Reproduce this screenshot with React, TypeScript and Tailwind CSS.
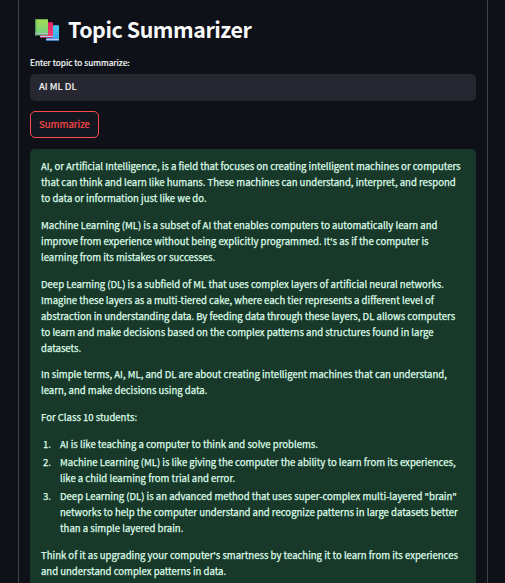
type BookProps = { x: number; y: number; fill: string; edge: string; h: number };

function Book({ x, y, fill, edge, h }: BookProps) {
  return (
    <g>
      <rect x={x} y={y} width="13" height={h} fill={fill} />
      <rect x={x} y={y} width="1.3" height={h} fill={edge} />
      <rect x={x} y={y} width="13" height="0.7" fill={edge} />
      <rect x={x} y={y + h - 2} width="13" height="1.2" fill="#c9bfe6" />
      <rect x={x} y={y + h - 0.8} width="13" height="0.8" fill={edge} />
    </g>
  );
}

function Books() {
  return (
    <svg width="24" height="24" viewBox="0 0 24 24" className="shrink-0">
      <defs>
        <linearGradient id="green" x1="0" y1="0" x2="0" y2="1">
          <stop offset="0" stopColor="#a5dc52" />
          <stop offset="1" stopColor="#6fcf83" />
        </linearGradient>
        <linearGradient id="pink" x1="0" y1="0" x2="0" y2="1">
          <stop offset="0" stopColor="#e0245e" />
          <stop offset="1" stopColor="#f24372" />
        </linearGradient>
        <linearGradient id="blue" x1="0" y1="0" x2="0" y2="1">
          <stop offset="0" stopColor="#4dc8e8" />
          <stop offset="1" stopColor="#35a5f2" />
        </linearGradient>
      </defs>
      <Book x={11} y={8} h={16} fill="url(#blue)" edge="#3b78b8" />
      <Book x={5} y={5} h={16} fill="url(#pink)" edge="#a52363" />
      <Book x={0} y={2} h={16.3} fill="url(#green)" edge="#579a54" />
    </svg>
  );
}

const paragraphs = [
  [
    "AI, or Artificial Intelligence, is a field that focuses on creating intelligent machines or computers",
    "that can think and learn like humans. These machines can understand, interpret, and respond",
    "to data or information just like we do.",
  ],
  [
    "Machine Learning (ML) is a subset of AI that enables computers to automatically learn and",
    "improve from experience without being explicitly programmed. It's as if the computer is",
    "learning from its mistakes or successes.",
  ],
  [
    "Deep Learning (DL) is a subfield of ML that uses complex layers of artificial neural networks.",
    "Imagine these layers as a multi-tiered cake, where each tier represents a different level of",
    "abstraction in understanding data. By feeding data through these layers, DL allows computers",
    "to learn and make decisions based on the complex patterns and structures found in large",
    "datasets.",
  ],
  [
    "In simple terms, AI, ML, and DL are about creating intelligent machines that can understand,",
    "learn, and make decisions using data.",
  ],
  ["For Class 10 students:"],
];

const points = [
  ["AI is like teaching a computer to think and solve problems."],
  [
    "Machine Learning (ML) is like giving the computer the ability to learn from its experiences,",
    "like a child learning from trial and error.",
  ],
  [
    "Deep Learning (DL) is an advanced method that uses super-complex multi-layered \"brain\"",
    "networks to help the computer understand and recognize patterns in large datasets better",
    "than a simple layered brain.",
  ],
];

const closing = [
  "Think of it as upgrading your computer's smartness by teaching it to learn from its experiences",
  "and understand complex patterns in data.",
];

function Lines({ lines }: { lines: string[] }) {
  return (
    <>
      {lines.map((line) => (
        <span key={line} className="block whitespace-nowrap">
          {line}
        </span>
      ))}
    </>
  );
}

export default function App() {
  return (
    <div className="h-[583px] overflow-hidden bg-[#0e1117] font-['Noto_Sans_CJK_SC','Noto_Sans_CJK_JP',sans-serif] text-[#fafafa]">
      <main className="ml-[18px] h-full w-[470px] border-x border-[#424349] px-[11px] pt-[14px]">
        <h1 className="flex h-[30px] items-center gap-[9px] pl-[5px] text-[21.4px] leading-[30px] font-bold tracking-[-0.44px] whitespace-nowrap">
          <Books />
          <span>Topic Summarizer</span>
        </h1>
        <label className="mt-[10px] block h-[17px] text-[8.33px] leading-[16px] [-webkit-text-stroke:0.2px]">Enter topic to summarize:</label>
        <div className="mt-[3px] h-[27px] rounded-[5px] bg-[#262730] px-[9px] text-[9.55px] leading-[25px] [-webkit-text-stroke:0.2px]">
          AI ML DL
        </div>
        <button className="mt-[10px] block h-[27px] w-[69px] rounded-[5px] border border-[#ff4b4b] bg-[#131720] text-[9.6px] leading-[25px] text-[#ff4b4b] [-webkit-text-stroke:0.2px]">
          Summarize
        </button>
        <section className="mt-[11px] h-[460px] rounded-[5px] bg-[#183929] px-[11px] pt-[9px] text-[9.55px] leading-[16px] text-[#dffde9] [-webkit-text-stroke:0.25px]">
          {paragraphs.map((p, i) => (
            <p key={p[0]} className={i === 2 ? "mb-[10px]" : "mb-[11px]"}>
              <Lines lines={p} />
            </p>
          ))}
          <ol className="mb-[11px]">
            {points.map((p, i) => (
              <li key={p[0]} className="mb-[2px] flex">
                <span className="w-[19px] shrink-0 pl-[2px]">{i + 1}.</span>
                <div>
                  <Lines lines={p} />
                </div>
              </li>
            ))}
          </ol>
          <p>
            <Lines lines={closing} />
          </p>
        </section>
      </main>
    </div>
  );
}
